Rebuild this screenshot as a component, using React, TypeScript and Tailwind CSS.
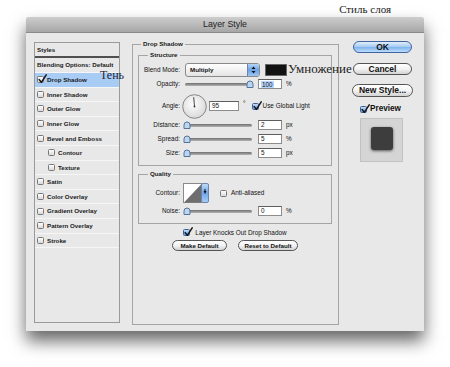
import React from "react";

const ui = "font-['Liberation_Sans',Arial,sans-serif]";
const serif = "font-['Liberation_Serif','Times_New_Roman',serif]";

const Check = ({ checked, blue }: { checked?: boolean; blue?: boolean }) => (
  <span
    className={`relative block w-[7px] h-[7px] shrink-0 rounded-[1.5px] border ${
      blue
        ? "border-[#3d5f93] bg-gradient-to-b from-[#c6defa] to-[#5a97e0]"
        : "border-[#777] bg-gradient-to-b from-white to-[#d9d9d9]"
    }`}
  >
    {checked && (
      <svg className="absolute left-0 top-[-3px]" width="9" height="10" viewBox="0 0 9 10">
        <path
          d="M1.2 5.6 L3.4 8.3 L8.2 0.8"
          fill="none"
          stroke="#161616"
          strokeWidth="1.5"
          strokeLinecap="round"
          strokeLinejoin="round"
        />
      </svg>
    )}
  </span>
);

const Slider = ({ at }: { at: number }) => (
  <div className="relative w-[67px] h-[8px] flex items-center shrink-0">
    <div className="w-full h-[3px] rounded-full bg-gradient-to-b from-[#6f6f6f] to-[#b4b4b4]" />
    <svg className="absolute top-0" style={{ left: at }} width="8" height="8" viewBox="0 0 8 8">
      <path d="M1 7.5 V4 A3 3 0 0 1 7 4 V7.5 Z" fill="#bcd6f2" stroke="#56739a" strokeWidth="1" />
    </svg>
  </div>
);

const Field = ({ value, wide, hl }: { value: string; wide?: boolean; hl?: boolean }) => (
  <div
    className={`${wide ? "w-[30px]" : "w-[24px]"} h-[10px] shrink-0 bg-white border border-[#8c8c8c] border-t-[#5e5e5e] flex items-center pl-[2px] text-[6.4px] text-[#111]`}
  >
    <span className={hl ? "bg-[#b5d5ff] px-[1px] leading-[7px]" : ""}>{value}</span>
  </div>
);

const Label = ({ children }: { children: React.ReactNode }) => (
  <span className="w-[46px] shrink-0 text-right pr-[5px] text-[6.4px] text-[#111]">{children}</span>
);

const Pill = ({ children, className }: { children: React.ReactNode; className: string }) => (
  <div
    className={`${className} flex items-center justify-center rounded-full border border-[#555] bg-gradient-to-b from-white via-[#f3f3f3] to-[#d2d2d2] font-bold text-[#111]`}
  >
    {children}
  </div>
);

const list: { name: string; on?: boolean; sub?: boolean }[] = [
  { name: "Drop Shadow", on: true },
  { name: "Inner Shadow" },
  { name: "Outer Glow" },
  { name: "Inner Glow" },
  { name: "Bevel and Emboss" },
  { name: "Contour", sub: true },
  { name: "Texture", sub: true },
  { name: "Satin" },
  { name: "Color Overlay" },
  { name: "Gradient Overlay" },
  { name: "Pattern Overlay" },
  { name: "Stroke" },
];

export default function App() {
  return (
    <div className={`relative w-[450px] h-[367px] bg-white overflow-hidden ${ui}`}>
      <div className="h-[17px] flex justify-end pr-[59px] pt-[4px]">
        <span className={`${serif} text-[11px] leading-[11px] text-[#222]`}>Стиль слоя</span>
      </div>

      <div className="ml-[26px] w-[398px] h-[314px] shadow-[0_10px_16px_rgba(0,0,0,0.6)]">
        <div className="h-[16px] rounded-t-[2px] bg-gradient-to-b from-[#cdcdcd] to-[#a7a7a7] border-b border-[#8a8a8a] flex items-center justify-center text-[8.8px] text-[#222]">
          Layer Style
        </div>

        <div className="h-[298px] bg-[#e8e8e8] flex items-start pt-[9px] pl-[8px]">
          {/* styles list */}
          <div className="w-[86px] h-[281px] border border-[#9a9a9a] bg-[#e8e8e8] flex flex-col text-[6.2px] font-bold text-[#1a1a1a]">
            <div className="h-[13px] flex items-center pl-[2px]">Styles</div>
            <div className="h-[2px] bg-[#505050]" />
            <div className="h-[15px] flex items-center pl-[2px] border-b border-[#f6f6f6]">
              Blending Options: Default
            </div>
            {list.map((it) => (
              <div
                key={it.name}
                className={`h-[14.6px] flex items-center gap-[3px] border-b border-[#f6f6f6] ${
                  it.sub ? "pl-[13px]" : "pl-[2px]"
                } ${it.on ? "bg-[#a8ccf4]" : ""}`}
              >
                <Check checked={it.on} />
                {it.name}
              </div>
            ))}
          </div>

          {/* drop shadow settings */}
          <fieldset className="ml-[12px] -mt-[2px] w-[207px] h-[285px] border border-[#a5a5a5] pl-[5px] pr-[6px]">
            <legend className="ml-[3px] px-[2px] text-[6.2px] leading-[8px] font-bold text-[#1a1a1a]">
              Drop Shadow
            </legend>

            <fieldset className="mt-[3px] border border-[#a5a5a5] pb-[7px]">
              <legend className="ml-[9px] px-[2px] text-[6.2px] leading-[8px] font-bold text-[#1a1a1a]">
                Structure
              </legend>
              <div className="mt-[4px] h-[14px] flex items-center">
                <Label>Blend Mode:</Label>
                <div className="w-[75px] h-[14px] rounded-[3px] border border-[#8a8a8a] bg-gradient-to-b from-white to-[#e4e4e4] flex items-center overflow-hidden">
                  <span className="flex-1 pl-[4px] text-[6.2px] font-bold text-[#111]">Multiply</span>
                  <div className="w-[12px] h-full bg-gradient-to-b from-[#b6d5f7] via-[#6aa3e6] to-[#9cc6f3] border-l border-[#6a86ad] flex flex-col items-center justify-center">
                    <svg width="5" height="8" viewBox="0 0 5 8">
                      <path d="M2.5 0.5 L4.5 3 H0.5 Z M2.5 7.5 L4.5 5 H0.5 Z" fill="#111" />
                    </svg>
                  </div>
                </div>
                <div className="ml-[5px] w-[22px] h-[12px] bg-[#121212] border border-[#666]" />
              </div>
              <div className="mt-[1px] h-[12px] flex items-center">
                <Label>Opacity:</Label>
                <Slider at={61} />
                <div className="ml-[6px]">
                  <Field value="100" hl />
                </div>
                <span className="ml-[4px] text-[6.4px] text-[#111]">%</span>
              </div>
              <div className="mt-[3px] h-[26px] flex items-center">
                <Label>Angle:</Label>
                <svg className="-ml-[3px] shrink-0" width="25" height="25" viewBox="0 0 25 25">
                  <defs>
                    <radialGradient id="dial" cx="0.45" cy="0.4" r="0.65">
                      <stop offset="0" stopColor="#ffffff" />
                      <stop offset="1" stopColor="#d6d6d6" />
                    </radialGradient>
                  </defs>
                  <circle cx="12.5" cy="12.5" r="11.8" fill="url(#dial)" stroke="#7d7d7d" strokeWidth="0.9" />
                  <line x1="12.5" y1="12.5" x2="11.7" y2="3.2" stroke="#333" strokeWidth="0.9" />
                  <circle cx="12.5" cy="12.5" r="0.9" fill="#333" />
                </svg>
                <div className="ml-[2px]">
                  <Field value="95" wide />
                </div>
                <span className="ml-[4px] -mt-[4px] text-[6.4px] text-[#111]">°</span>
                <div className="ml-[6px]">
                  <Check checked blue />
                </div>
                <span className="ml-[4px] text-[6.4px] text-[#111]">Use Global Light</span>
              </div>
              <div className="mt-[1px] h-[10px] flex items-center">
                <Label>Distance:</Label>
                <Slider at={-2} />
                <div className="ml-[6px]">
                  <Field value="2" />
                </div>
                <span className="ml-[4px] text-[6.4px] text-[#111]">px</span>
              </div>
              <div className="mt-[4px] h-[10px] flex items-center">
                <Label>Spread:</Label>
                <Slider at={-2} />
                <div className="ml-[6px]">
                  <Field value="5" />
                </div>
                <span className="ml-[4px] text-[6.4px] text-[#111]">%</span>
              </div>
              <div className="mt-[4px] h-[10px] flex items-center">
                <Label>Size:</Label>
                <Slider at={-2} />
                <div className="ml-[6px]">
                  <Field value="5" />
                </div>
                <span className="ml-[4px] text-[6.4px] text-[#111]">px</span>
              </div>
            </fieldset>

            <fieldset className="mt-[4px] border border-[#a5a5a5] pb-[7px]">
              <legend className="ml-[9px] px-[2px] text-[6.2px] leading-[8px] font-bold text-[#1a1a1a]">
                Quality
              </legend>
              <div className="mt-[5px] h-[20px] flex items-center">
                <Label>Contour:</Label>
                <svg className="-ml-[2px] shrink-0" width="26" height="20" viewBox="0 0 26 20">
                  <defs>
                    <linearGradient id="cstrip" x1="0" y1="0" x2="0" y2="1">
                      <stop offset="0" stopColor="#c4ddf8" />
                      <stop offset="0.5" stopColor="#6ea6e8" />
                      <stop offset="1" stopColor="#a9cdf5" />
                    </linearGradient>
                  </defs>
                  <rect x="0.5" y="0.5" width="18" height="19" fill="#fff" stroke="#8a8a8a" />
                  <polygon points="1,19.5 18.5,1 18.5,19.5" fill="#6e6e6e" />
                  <rect x="18.5" y="0.5" width="7" height="19" rx="1.5" fill="url(#cstrip)" stroke="#6a86ad" />
                  <path d="M20.5 8 H23.5 L22 11 Z" fill="#111" />
                  <rect x="21.5" y="6" width="1" height="2" fill="#111" />
                </svg>
                <div className="ml-[11px]">
                  <Check />
                </div>
                <span className="ml-[4px] text-[6.4px] text-[#111]">Anti-aliased</span>
              </div>
              <div className="mt-[3px] h-[10px] flex items-center">
                <Label>Noise:</Label>
                <Slider at={-2} />
                <div className="ml-[6px]">
                  <Field value="0" />
                </div>
                <span className="ml-[4px] text-[6.4px] text-[#111]">%</span>
              </div>
            </fieldset>

            <div className="mt-[4px] h-[9px] flex items-center justify-center gap-[5px]">
              <Check checked blue />
              <span className="text-[6.4px] text-[#111]">Layer Knocks Out Drop Shadow</span>
            </div>
            <div className="mt-[3px] flex justify-center gap-[11px] text-[6.2px]">
              <Pill className="w-[55px] h-[11px]">Make Default</Pill>
              <Pill className="w-[60px] h-[11px]">Reset to Default</Pill>
            </div>
          </fieldset>

          {/* buttons */}
          <div className="ml-[14px] -mt-[1px] w-[61px] flex flex-col text-[8.5px]">
            <div className="w-[59px] h-[12px] flex items-center justify-center rounded-full border border-[#3f64a0] bg-[linear-gradient(#e2eefc,#a3c9f3_50%,#7fb3ee_52%,#bcdcfb)] font-bold text-[#111]">
              OK
            </div>
            <Pill className="mt-[10px] w-[59px] h-[12px]">Cancel</Pill>
            <Pill className="mt-[9px] -ml-[1px] w-[61px] h-[13px]">New Style...</Pill>
            <div className="mt-[8px] h-[9px] pl-[7px] flex items-center gap-[3px]">
              <Check checked blue />
              <span className="text-[8.2px] font-bold text-[#111]">Preview</span>
            </div>
            <div className="mt-[4px] ml-[7px] w-[43px] h-[44px] bg-[#d5d5d5] border border-[#c2c2c2] flex items-center justify-center pb-[3px]">
              <div className="w-[22px] h-[23px] rounded-[3px] bg-[#3d3d3d] shadow-[0_1px_3px_rgba(0,0,0,0.6)]" />
            </div>
          </div>
        </div>
      </div>

      {/* annotations over the dialog */}
      <span className={`absolute left-[100px] top-[69px] ${serif} text-[12px] leading-[12px] text-[#1e2235]`}>Тень</span>
      <span className={`absolute left-[288px] top-[62px] ${serif} text-[13px] leading-[13px] text-[#222]`}>Умножение</span>
    </div>
  );
}
